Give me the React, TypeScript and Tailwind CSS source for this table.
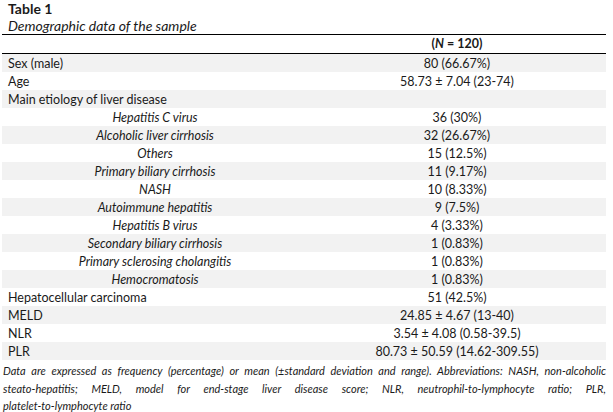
const ROWS: { label: string; value: string; sub?: boolean }[] = [
  { label: 'Sex (male)', value: '80 (66.67%)' },
  { label: 'Age', value: '58.73 ± 7.04 (23-74)' },
  { label: 'Main etiology of liver disease', value: '' },
  { label: 'Hepatitis C virus', value: '36 (30%)', sub: true },
  { label: 'Alcoholic liver cirrhosis', value: '32 (26.67%)', sub: true },
  { label: 'Others', value: '15 (12.5%)', sub: true },
  { label: 'Primary biliary cirrhosis', value: '11 (9.17%)', sub: true },
  { label: 'NASH', value: '10 (8.33%)', sub: true },
  { label: 'Autoimmune hepatitis', value: '9 (7.5%)', sub: true },
  { label: 'Hepatitis B virus', value: '4 (3.33%)', sub: true },
  { label: 'Secondary biliary cirrhosis', value: '1 (0.83%)', sub: true },
  { label: 'Primary sclerosing cholangitis', value: '1 (0.83%)', sub: true },
  { label: 'Hemocromatosis', value: '1 (0.83%)', sub: true },
  { label: 'Hepatocellular carcinoma', value: '51 (42.5%)' },
  { label: 'MELD', value: '24.85 ± 4.67 (13-40)' },
  { label: 'NLR', value: '3.54 ± 4.08 (0.58-39.5)' },
  { label: 'PLR', value: '80.73 ± 50.59 (14.62-309.55)' },
];

export default function App() {
  return (
    <div className="w-[613px] h-[412px] bg-white text-[#1a1a1a] text-[12.5px] font-['Lato','Liberation_Sans',sans-serif] overflow-hidden">
      <div className="w-[606px] pl-[2px]">
        {/* caption */}
        <div className="pl-[6px] pt-[1px] h-[35px] border-b border-black text-[14px]">
          <p className="font-bold leading-[16px]">Table 1</p>
          <p className="italic leading-[18px]">Demographic data of the sample</p>
        </div>

        {/* header */}
        <div className="grid grid-cols-[306px_1fr] h-[19px] border-b border-black items-center">
          <span />
          <span className="text-center font-bold">
            (<i>N</i> = 120)
          </span>
        </div>

        {/* body */}
        {ROWS.map((r, i) => (
          <div
            key={r.label}
            className={`grid grid-cols-[306px_1fr] h-[18px] items-center pt-[1px] ${i % 2 === 0 ? 'bg-[#f2f2f2]' : 'bg-white'}`}
          >
            <span className={r.sub ? 'italic text-center' : 'pl-[6px]'}>{r.label}</span>
            <span className="text-center">{r.value}</span>
          </div>
        ))}

        {/* note */}
        <div className="pt-[2px] pl-[1px] italic text-[11px] leading-[17.5px]">
          <p className="text-justify [text-align-last:justify]">
            Data are expressed as frequency (percentage) or mean (±standard deviation and range). Abbreviations: NASH, non-alcoholic
          </p>
          <p className="text-justify [text-align-last:justify]">
            steato-hepatitis; MELD, model for end-stage liver disease score; NLR, neutrophil-to-lymphocyte ratio; PLR,
          </p>
          <p>platelet-to-lymphocyte ratio</p>
        </div>
      </div>
    </div>
  );
}
